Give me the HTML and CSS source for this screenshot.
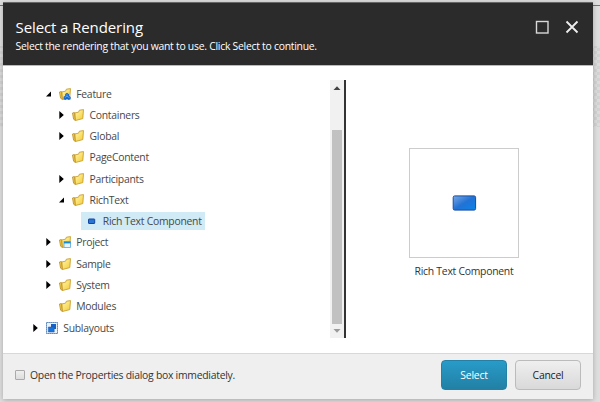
FILE: index.html
```
<!DOCTYPE html>
<html lang="en">
<head>
<meta charset="utf-8">
<title>Select a Rendering</title>
<link rel="stylesheet" href="styles.css">
</head>
<body>
<svg class="defs" aria-hidden="true">
  <defs>
    <linearGradient id="gold" x1="0" y1="0" x2=".8" y2="1"><stop offset="0" stop-color="#fff6b0"/><stop offset="1" stop-color="#f5cf3c"/></linearGradient>
    <linearGradient id="blue" x1="0" y1="0" x2="1" y2="1"><stop offset="0" stop-color="#78a9e4"/><stop offset=".5" stop-color="#2272d5"/><stop offset="1" stop-color="#0a84ea"/></linearGradient>
    <symbol id="folder" viewBox="0 0 12 12"><path d="M.5 4 2.4 3.5 3.4 11.5 1.6 10.2Z" fill="#f3cf50" stroke="#b98a1c" stroke-width=".8"/><path d="M2.9 3.9 6.5 3.2 7.4 1.2 11.5 .6 10.8 9.6 3.5 11.5Z" fill="url(#gold)" stroke="#c39622" stroke-width=".8"/></symbol>
    <symbol id="right" viewBox="0 0 5 8"><path d="M.3 0 4.8 4 .3 8Z" fill="#000"/></symbol>
    <symbol id="down" viewBox="0 0 5 8"><path d="M5 1.5V6.5H0Z" fill="#000"/></symbol>
  </defs>
</svg>
<main class="dialog">
  <header class="header">
    <div>
      <h1>Select a Rendering</h1>
      <p>Select the rendering that you want to use. Click Select to continue.</p>
    </div>
    <div class="controls">
      <svg width="14" height="14"><rect x="1.5" y="1.5" width="11.5" height="11.5" fill="none" stroke="#d8d8d8" stroke-width="1.4"/></svg>
      <svg width="14" height="14"><path d="M1.5 1.5 12.5 12.5M12.5 1.5 1.5 12.5" stroke="#eee" stroke-width="1.8"/></svg>
    </div>
  </header>
  <section class="body">
    <ul class="tree">
      <li class="l1"><svg class="arrow"><use href="#down"/></svg><svg class="icon" viewBox="0 0 12 12"><use href="#folder"/><path d="M8 4.7 10 6.2V7.7L11.7 9V11.3L9.8 12 8 11.2 6.3 12 4.6 11.2V8.8L6.2 7.7V6Z" fill="#1768ca"/><path d="M8 5.9V8.3L5.8 9.5M8 8.3 10.5 9.7" stroke="#6bb4ff" stroke-width=".7" fill="none"/></svg><span class="label">Feature</span></li>
      <li class="l2"><svg class="arrow"><use href="#right"/></svg><svg class="icon"><use href="#folder"/></svg><span class="label">Containers</span></li>
      <li class="l2"><svg class="arrow"><use href="#right"/></svg><svg class="icon"><use href="#folder"/></svg><span class="label">Global</span></li>
      <li class="l2"><svg class="arrow"></svg><svg class="icon"><use href="#folder"/></svg><span class="label">PageContent</span></li>
      <li class="l2"><svg class="arrow"><use href="#right"/></svg><svg class="icon"><use href="#folder"/></svg><span class="label">Participants</span></li>
      <li class="l2"><svg class="arrow"><use href="#down"/></svg><svg class="icon"><use href="#folder"/></svg><span class="label">RichText</span></li>
      <li class="l3"><div class="selected"><svg class="icon" viewBox="0 0 12 12"><rect x="2.5" y="4" width="6.2" height="4.5" rx=".5" fill="#2875d4" stroke="#1246a3"/></svg><span class="label">Rich Text Component</span></div></li>
      <li class="l1"><svg class="arrow"><use href="#right"/></svg><svg class="icon" viewBox="0 0 12 12"><use href="#folder"/><rect x="5" y="5.5" width="6.5" height="6" fill="#e6f4fc" stroke="#57a9dd" stroke-width=".8"/><path d="M5 6.5H11.5" stroke="#168bdc" stroke-width="1.8"/></svg><span class="label">Project</span></li>
      <li class="l1"><svg class="arrow"><use href="#right"/></svg><svg class="icon"><use href="#folder"/></svg><span class="label">Sample</span></li>
      <li class="l1"><svg class="arrow"><use href="#right"/></svg><svg class="icon"><use href="#folder"/></svg><span class="label">System</span></li>
      <li class="l1"><svg class="arrow"></svg><svg class="icon"><use href="#folder"/></svg><span class="label">Modules</span></li>
      <li class="l0"><svg class="arrow"><use href="#right"/></svg><svg class="icon" viewBox="0 0 12 12"><rect x=".5" y=".5" width="11" height="11" fill="#e8f2ff" stroke="#235ca8" stroke-dasharray="1.2 .8"/><path d="M5 2H10V7H5Z" fill="#1263c5"/><path d="M2.3 5H8.2V10H2.3Z" fill="#1675dc" stroke="#2e559c" stroke-width=".5"/></svg><span class="label">Sublayouts</span></li>
    </ul>
    <div class="scrollbar">
      <svg class="up" width="8" height="4"><path d="M.5 4 4 .3 7.5 4Z" fill="#444"/></svg>
      <div class="thumb"></div>
      <svg class="dn" width="8" height="4"><path d="M.5 0 4 3.7 7.5 0Z" fill="#999"/></svg>
    </div>
    <div class="preview">
      <div class="card"><svg width="25" height="16"><rect x="1.2" y=".9" width="22.4" height="14.2" rx="1.5" fill="url(#blue)" stroke="#164b9f"/></svg></div>
      <span class="caption">Rich Text Component</span>
    </div>
  </section>
  <footer class="footer">
    <label class="check"><span class="box"></span><span class="check-text">Open the Properties dialog box immediately.</span></label>
    <div class="buttons">
      <button class="primary">Select</button>
      <button class="secondary">Cancel</button>
    </div>
  </footer>
</main>
</body>
</html>
```
FILE: styles.css
```
* { box-sizing: border-box; }
body {
  margin: 0;
  height: 402px;
  padding: 2px 7px 3px 3px;
  overflow: hidden;
  font-family: "Open Sans", sans-serif;
  font-size: 10.4px;
  letter-spacing: -.26px;
  color: #484848;
  background-color: #dedede;
  background-image:
    linear-gradient(#c8533f, #c8533f),
    linear-gradient(#dedede, #dedede),
    linear-gradient(#dedede, #dedede),
    repeating-conic-gradient(#d2d2d2 0 25%, #dcdcdc 0 50%);
  background-position: 0 5px, 0 0, 0 127px, 0 0;
  background-size: 100% 1px, 100% 46px, 100% 275px, 6px 6px;
  background-repeat: no-repeat, no-repeat, no-repeat, repeat;
}
svg { display: block; flex: none; }
.defs { position: absolute; width: 0; height: 0; }
.dialog {
  display: flex;
  flex-direction: column;
  height: 397px;
  background: #fff;
  box-shadow: 0 1px 5px rgba(0,0,0,.25);
}
.header {
  height: 63px;
  flex: none;
  display: flex;
  justify-content: space-between;
  padding: 15px 14px 0 12.5px;
  background: #2b2b2b;
  border-top: 1px solid #666;
  color: #fff;
}
h1 { margin: 0; font-size: 15px; line-height: 18px; font-weight: 400; letter-spacing: -.1px; white-space: nowrap; }
.header p { margin: 3px 0 0; line-height: 15px; white-space: nowrap; }
.controls { display: flex; gap: 16px; padding-top: 2px; }
.body { display: flex; height: 288px; flex: none; border-top: 1px solid #bbb; }
.tree { list-style: none; margin: 0; padding: 17px 0 0 30px; width: 327px; }
.tree li { height: 21.27px; display: flex; align-items: center; white-space: nowrap; }
.l1 { padding-left: 13px; }
.l2 { padding-left: 26.3px; }
.l3 { padding-left: 48px; }
.arrow { width: 5px; height: 8px; margin-right: 8px; }
.icon { width: 12px; height: 12px; margin-right: 5.2px; }
.selected { display: flex; align-items: center; width: 124px; height: 18px; padding-left: 4.6px; background: #d0eaf6; }
.scrollbar {
  width: 16px;
  height: 258px;
  margin-top: 14px;
  background: #f1f1f1;
  border-right: 2px solid #333;
  display: flex;
  flex-direction: column;
  align-items: center;
  padding-top: 6px;
}
.thumb { width: 10px; height: 194px; margin: 40px 0 5px; background: #c1c1c1; }
.preview { flex: 1; display: flex; flex-direction: column; align-items: center; padding: 82px 11px 0 0; color: #333; }
.card { width: 110px; height: 110px; border: 1px solid #ccc; display: flex; align-items: center; justify-content: center; }
.caption { line-height: 16px; margin-top: 5px; white-space: nowrap; }
.footer {
  flex: 1;
  display: flex;
  justify-content: space-between;
  padding: 6px 12px 0;
  background: #efefef;
  border-top: 1px solid #d8d8d8;
}
.check { display: flex; align-items: center; height: 30px; color: #333; white-space: nowrap; }
.box { width: 10px; height: 10px; margin-right: 5px; border: 1px solid #aaa; border-radius: 1px; background: linear-gradient(#eee, #ddd); }
.buttons { display: flex; gap: 8px; }
button { width: 66px; height: 30px; padding: 0; border-radius: 4px; font: 10.4px "Open Sans", sans-serif; letter-spacing: -.2px; }
.primary { color: #fff; border: 1px solid #2481a5; background: linear-gradient(#289bc8, #2280a4); }
.secondary { color: #222; border: 1px solid #bbb; background: linear-gradient(#efefef, #d9d9d9); }
```
